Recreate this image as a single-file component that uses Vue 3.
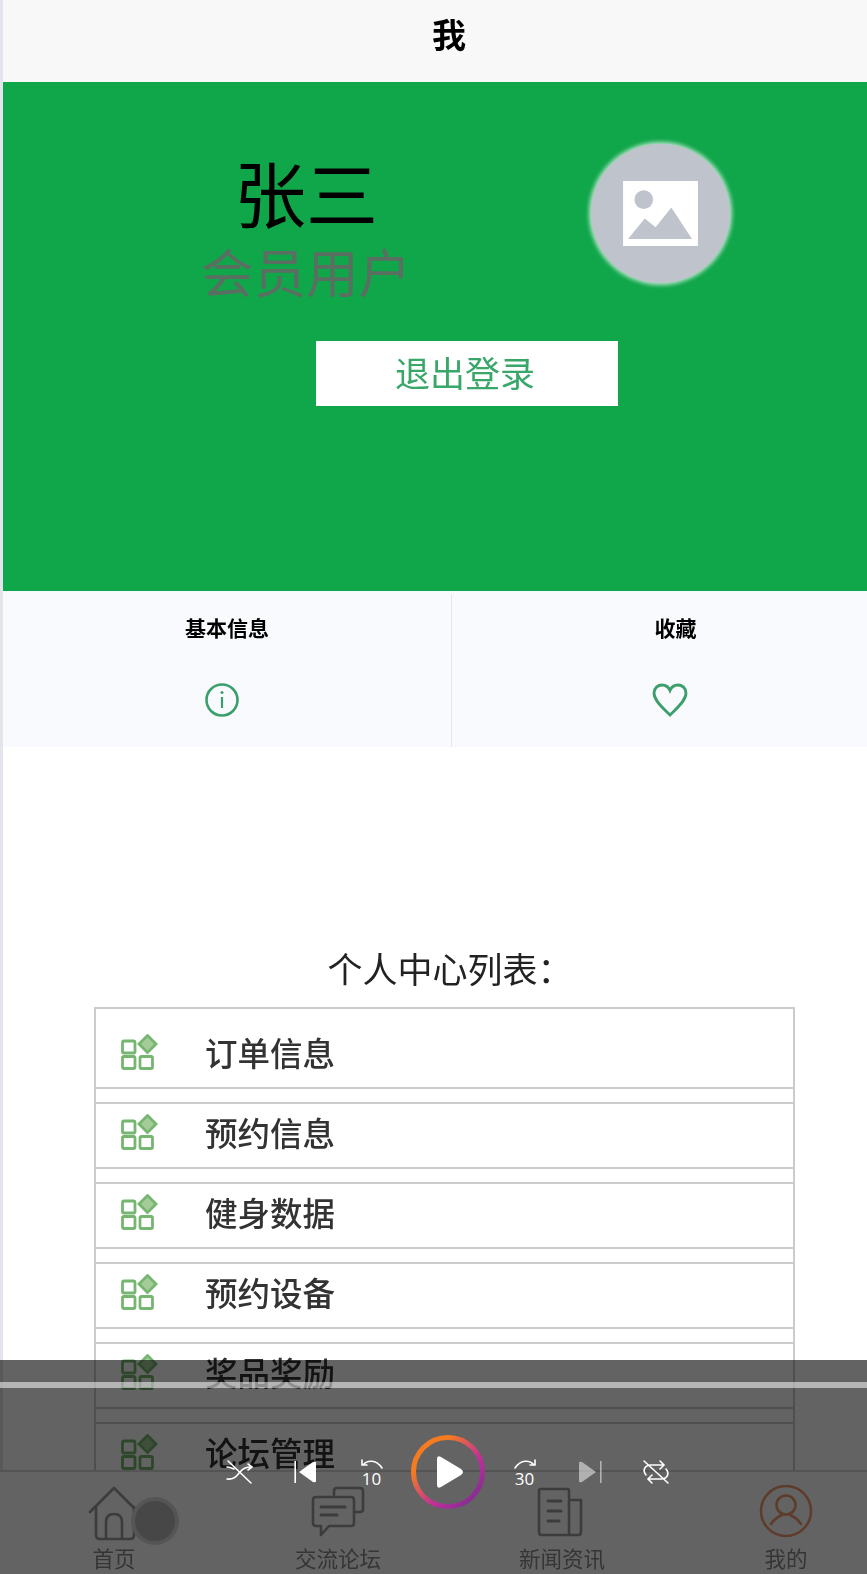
<template>
  <div class="page">
    <div class="content">
      <header class="topbar">我</header>

      <section class="hero">
        <div class="hero__row">
          <div class="hero__names">
            <div class="hero__name">张三</div>
            <div class="hero__role">会员用户</div>
          </div>
          <div class="avatar">
            <svg width="75" height="65" viewBox="0 0 76 66">
              <rect width="76" height="66" fill="#fff" />
              <circle cx="21" cy="19" r="9.500" fill="#bfc3cc" />
              <path d="M5 59 L22 38 L33 47 L49 27 L70 59 Z" fill="#bfc3cc" />
            </svg>
          </div>
        </div>
        <button class="logout">退出登录</button>
      </section>

      <section class="tabs">
        <div class="tab">
          <div class="tab__label">基本信息</div>
          <svg class="tab__icon tab__icon--info" width="36" height="34" viewBox="0 0 36 34" fill="none" stroke="#3a9f6a">
            <circle cx="18" cy="17" r="15.500" stroke-width="2.600" />
            <circle cx="18" cy="9.500" r="1.500" fill="#3a9f6a" stroke="none" />
            <path d="M18 14 V25" stroke-width="2.200" />
          </svg>
        </div>
        <div class="tab tab--right">
          <div class="tab__label">收藏</div>
          <svg class="tab__icon" width="36" height="34" viewBox="0 0 36 34" fill="none" stroke="#3a9f6a" stroke-width="2.800">
            <path d="M18 32 C12 26 2 18 2 10 C2 5 6 2 10 2 C13.500 2 16.500 4 18 7.500 C19.500 4 22.500 2 26 2 C30 2 34 5 34 10 C34 18 24 26 18 32 Z" />
          </svg>
        </div>
      </section>

      <h2 class="list-title">个人中心列表：</h2>
      <ul class="list">
        <li v-for="item in items" :key="item" class="list__item">
          <svg class="list__icon" width="38" height="36" viewBox="0 0 38 36" fill="none" stroke="#76b670" stroke-width="2.800">
            <rect x="1.500" y="7" width="12.500" height="12" rx="1.500" />
            <rect x="1.500" y="22.500" width="12.500" height="12" rx="1.500" />
            <rect x="19" y="22.500" width="12.500" height="12" rx="1.500" />
            <path d="M26.500 1.500 L35 10 L26.500 18.500 L18 10 Z" fill="#a3cc98" />
          </svg>
          <span>{{ item }}</span>
        </li>
      </ul>

      <nav class="nav">
        <div v-for="n in navs" :key="n.label" class="nav__item" :class="{ 'nav__item--on': n.on }">
          <svg width="56" height="56" viewBox="0 0 56 56" fill="none" stroke="currentColor" stroke-width="2.600" stroke-linejoin="round" stroke-linecap="round">
            <template v-if="n.icon === 'home'">
              <path d="M4 27 L28 3 L52 27" />
              <path d="M10 22 V50 Q10 54 14 54 H44 Q48 54 48 50 V22" />
              <path d="M20 54 V37 Q20 29 28 29 Q36 29 36 37 V54" />
            </template>
            <template v-else-if="n.icon === 'chat'">
              <path d="M24 10 V6 Q24 3 27 3 H50 Q53 3 53 6 V24 Q53 27 50 27 H44" />
              <path d="M6 12 H41 Q44 12 44 15 V38 Q44 41 41 41 H19 L11 50 V41 H6 Q3 41 3 38 V15 Q3 12 6 12 Z" />
              <path d="M11 22 H35 M11 30 H27" stroke-width="3" />
            </template>
            <template v-else-if="n.icon === 'news'">
              <path d="M35 13 V6 Q35 4 33 4 H7 Q5 4 5 6 V47 Q5 50 8 50 H44 Q47 50 47 47 V15 H35 V50" />
              <path d="M14 16 H27 M14 26 H27 M14 36 H25" stroke-width="3" />
            </template>
            <template v-else>
              <circle cx="28" cy="26" r="25" />
              <circle cx="28" cy="20" r="9.500" />
              <path d="M13 39 C17 33 22 31 24 30 M43 39 C39 33 34 31 32 30" />
            </template>
          </svg>
          <span class="nav__label">{{ n.label }}</span>
        </div>
        <div class="float-ball"></div>
      </nav>
    </div>

    <div class="player">
      <div class="player__bar"></div>
      <div class="player__controls">
        <div class="ctl">
          <svg width="30" height="26" viewBox="0 0 30 26" fill="none" stroke="#fff" stroke-width="1.600" stroke-linecap="round">
            <path d="M3 2 L26 24" />
            <path d="M2 20 C10 21 12 16 15 13 C18 9 21 8 26 8 M23 5 L27 8 L23 11" />
            <path d="M2 8 C5 8 7 9 9 10" />
          </svg>
        </div>
        <div class="ctl">
          <svg width="24" height="24" viewBox="0 0 24 24" fill="#fff">
            <rect x="0.400" y="1" width="1.600" height="22" />
            <path d="M5 12 L19 2 Q22 1 22 3 V21 Q22 23 19 22 Z" />
          </svg>
        </div>
        <div class="ctl ctl--num">
          <svg width="24" height="12" viewBox="0 0 24 12" fill="none" stroke="#fff" stroke-width="1.600" stroke-linecap="round">
            <path d="M3 6 C7 1 16 0 22 9 M2 1 V6 H7" />
          </svg>
          <span>10</span>
        </div>
        <div class="play">
          <svg width="74" height="74" viewBox="0 0 74 74">
            <defs>
              <linearGradient id="ring" x1="0" y1="0" x2="1" y2="1">
                <stop offset="0.25" stop-color="#f47b20" />
                <stop offset="0.62" stop-color="#c0309a" />
                <stop offset="1" stop-color="#6d2c91" />
              </linearGradient>
            </defs>
            <circle cx="37" cy="37" r="34.500" fill="none" stroke="url(#ring)" stroke-width="5" />
            <path d="M26 24 Q26 20 30 22 L50 34 Q54 37 50 40 L30 52 Q26 54 26 50 Z" fill="#fff" />
          </svg>
        </div>
        <div class="ctl ctl--num ctl--fwd">
          <svg width="24" height="12" viewBox="0 0 24 12" fill="none" stroke="#fff" stroke-width="1.600" stroke-linecap="round">
            <path d="M2 9 C8 0 17 1 21 6 M22 1 V6 H17" />
          </svg>
          <span>30</span>
        </div>
        <div class="ctl">
          <svg width="24" height="24" viewBox="0 0 24 24" fill="#fff" opacity="0.5">
            <rect x="22" y="1" width="1.600" height="22" />
            <path d="M18 12 L4 2 Q1 1 1 3 V21 Q1 23 4 22 Z" />
          </svg>
        </div>
        <div class="ctl">
          <svg width="30" height="26" viewBox="0 0 30 26" fill="none" stroke="#fff" stroke-width="1.600" stroke-linecap="round">
            <path d="M3 2 L27 24" />
            <path d="M5 16 C1 11 4 6 10 6 H23 M19 2 L23 6 L19 10" />
            <path d="M25 10 C29 15 26 20 20 20 H7 M11 16 L7 20 L11 24" />
          </svg>
        </div>
      </div>
    </div>
  </div>
</template>

<script setup>
const items = ['订单信息', '预约信息', '健身数据', '预约设备', '奖品奖励', '论坛管理']

const navs = [
  { label: '首页', icon: 'home' },
  { label: '交流论坛', icon: 'chat' },
  { label: '新闻资讯', icon: 'news' },
  { label: '我的', icon: 'user', on: true }
]
</script>

<style>
html,
body {
  margin: 0;
  background: #fff;
}
</style>

<style scoped>
.page {
  position: relative;
  width: 867px;
  height: 1574px;
  overflow: hidden;
  font-family: "Liberation Sans", "Noto Sans CJK SC", sans-serif;
  color: #222;
}

/* the source picture is soft, only the player on top is crisp */
.content {
  position: relative;
  height: 100%;
  box-sizing: border-box;
  padding-left: 3px;
  overflow: hidden;
  background: linear-gradient(90deg, #e3e5ec 3px, #fff 3px);
  filter: blur(0.5px);
}

.topbar {
  height: 82px;
  background: #f8f8f8;
  text-align: center;
  font-size: 34px;
  font-weight: 700;
  line-height: 72px;
  color: #000;
  padding-left: 28px;
}

.hero {
  height: 509px;
  background: #10a64a;
  box-sizing: border-box;
  padding-top: 61px;
}

.hero__row {
  display: flex;
  align-items: flex-start;
}

.hero__names {
  width: 400px;
  margin-left: 103px;
  text-align: center;
  padding-top: 12px;
}

.hero__name {
  font-size: 72px;
  line-height: 84px;
  color: #000;
}

.hero__role {
  font-size: 52.500px;
  line-height: 72px;
  color: #5a6e62;
}

.avatar {
  width: 139px;
  height: 139px;
  margin: 1px 0 0 85px;
  border-radius: 50%;
  background: #bfc3cc;
  box-shadow: 0 0 4px 2px rgba(255, 255, 255, 0.7);
  display: flex;
  align-items: center;
  justify-content: center;
}

.logout {
  display: block;
  width: 302px;
  height: 65px;
  margin: 30px 0 0 313px;
  padding: 0 4px 4px 0;
  border: 0;
  background: #fff;
  color: #3aa76a;
  font-family: inherit;
  font-size: 35px;
}

.tabs {
  display: flex;
  height: 156px;
  background: #f9fafe;
  overflow: hidden;
}

.tab {
  flex: 0 0 448px;
  box-sizing: border-box;
  padding-top: 23px;
  text-align: center;
}

.tab--right {
  border-left: 1px solid #e6e7ea;
  margin-top: 3px;
  padding-top: 20px;
}

.tab__label {
  font-size: 21px;
  line-height: 30px;
  font-weight: 700;
  color: #000;
}

.tab__icon {
  display: block;
  margin: 39px auto 0;
  position: relative;
  left: -6px;
}

.tab__icon--info {
  left: -5px;
}

.list-title {
  margin: 200px 0 0;
  padding-left: 30px;
  font-size: 35px;
  font-weight: 400;
  line-height: 48px;
  height: 60px;
  text-align: center;
  color: #222;
}

.list {
  list-style: none;
  margin: 0 0 0 91px;
  padding: 0;
  width: 701px;
  box-sizing: border-box;
  border: 2px solid #ccc;
  border-bottom: 0;
}

.list__item {
  display: flex;
  align-items: center;
  box-sizing: border-box;
  height: 67px;
  margin-bottom: 13px;
  padding: 0 0 8px 25px;
  border-top: 2px solid #ccc;
  border-bottom: 2px solid #ccc;
  font-size: 32.500px;
  font-weight: 500;
  color: #333;
}

.list__item:first-child {
  height: 80px;
  padding-top: 15px;
  border-top: 0;
}

.list__icon {
  flex: none;
  margin-right: 46px;
}

.nav {
  position: absolute;
  left: 0;
  bottom: 0;
  display: flex;
  width: 867px;
  height: 104px;
  box-sizing: border-box;
  padding-left: 2px;
  background: #fff;
  border-top: 2px solid #d9d9d9;
  overflow: hidden;
}

.nav__item {
  flex: 0 0 224px;
  display: flex;
  flex-direction: column;
  align-items: center;
  padding-top: 13px;
  color: #9a9a9a;
}

.nav__item--on {
  color: #f09a70;
}

.nav__label {
  font-size: 21.500px;
  line-height: 28px;
  margin-top: 5px;
  color: #888;
}

.float-ball {
  position: absolute;
  left: 131px;
  top: 25px;
  width: 40px;
  height: 40px;
  border-radius: 50%;
  background: #b6b6b6;
  border: 4px solid #dadada;
}

.player {
  position: absolute;
  left: 0;
  bottom: 0;
  width: 867px;
  height: 214px;
  box-sizing: border-box;
  padding: 22px 0 0 28px;
  background: rgba(0, 0, 0, 0.61);
}

.player__bar {
  height: 6px;
  margin-left: -28px;
  background: rgba(255, 255, 255, 0.53);
}

.player__controls {
  display: flex;
  align-items: center;
  justify-content: center;
  gap: 12px;
  margin-top: 47px;
}

.ctl {
  flex: 0 0 54px;
  height: 74px;
  display: flex;
  flex-direction: column;
  align-items: center;
  justify-content: center;
}

.ctl--num {
  color: #fff;
  font-size: 17px;
  line-height: 15px;
  font-family: "Open Sans", sans-serif;
}

.ctl--fwd svg,
.ctl--fwd span {
  margin-left: 2px;
}

.play {
  flex: 0 0 74px;
  height: 74px;
}

.play svg {
  display: block;
}
</style>
